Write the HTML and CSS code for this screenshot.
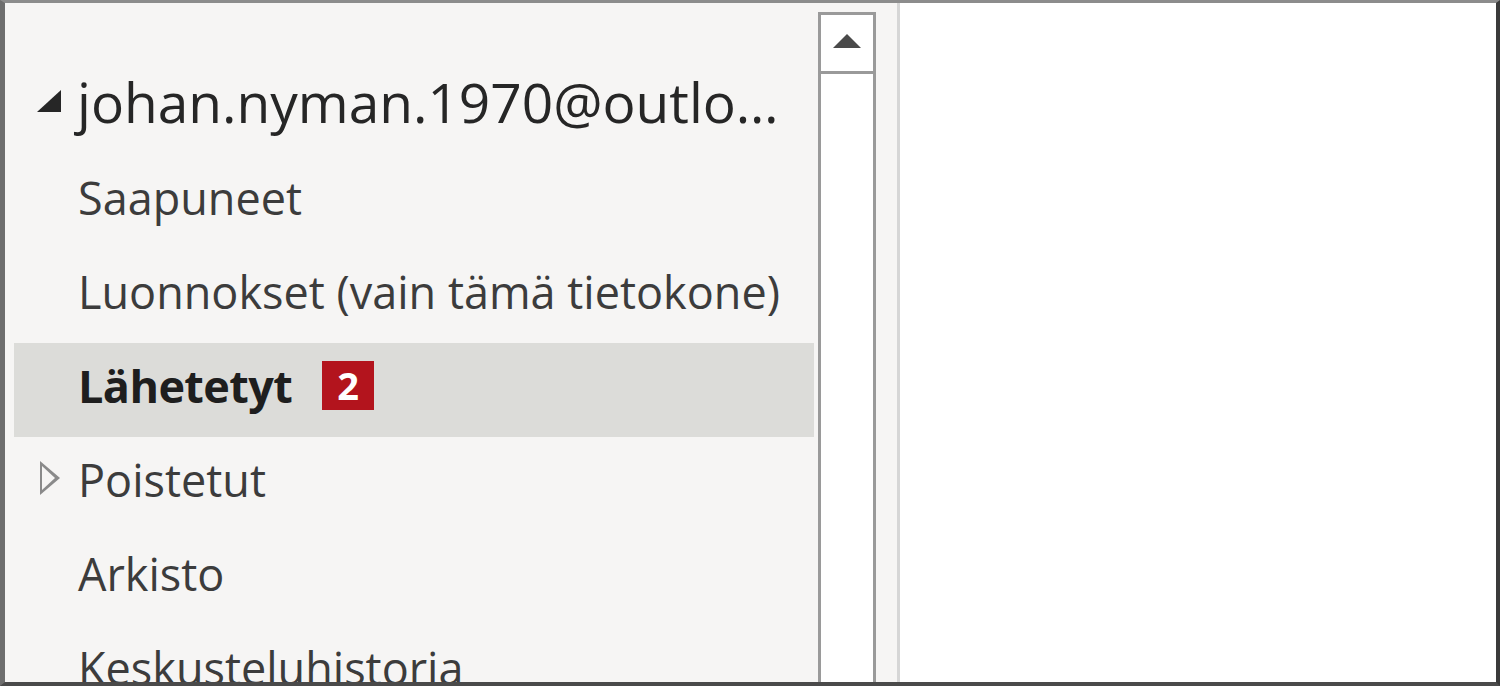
FILE: index.html
```html
<!DOCTYPE html>
<html lang="fi">
<head>
  <meta charset="UTF-8" />
  <meta name="viewport" content="width=device-width, initial-scale=1.0"/>
  <title>Kansiot</title>
  <link rel="stylesheet" href="styles.css">
</head>
<body>
  <div class="ikkuna">
    <div class="kansiot">
      <div class="tili">
        <span class="nuoli auki"></span>
        <span class="nimi">johan.nyman.1970@outlo…</span>
      </div>
      <div class="kansio">Saapuneet</div>
      <div class="kansio">Luonnokset (vain tämä tietokone)</div>
      <div class="kansio valittu">Lähetetyt <span class="maara">2</span></div>
      <div class="kansio">
        <span class="nuoli kiinni"></span>
        Poistetut
      </div>
      <div class="kansio">Arkisto</div>
      <div class="kansio">Keskusteluhistoria</div>
    </div>

    <div class="vieritys">
      <div class="ylos"><span class="kolmio"></span></div>
      <div class="ura"></div>
    </div>

    <div class="rako"></div>
    <div class="lukuruutu"></div>
  </div>
</body>
</html>
```

FILE: styles.css
```css
html, body {
  margin: 0;
  height: 100%;
  overflow: hidden;
}
body {
  font-family: "Open Sans", "Noto Sans", sans-serif;
  background: #ffffff;
}
.ikkuna {
  box-sizing: border-box;
  height: 686px;
  display: flex;
  border-top: 3px solid #8c8c8c;
  border-left: 5px solid #6e6e6e;
  border-right: 4px solid #3a3a3a;
  border-bottom: 4px solid #4a4a4a;
  background: #f6f5f4;
}
.kansiot {
  width: 813px;
  padding-top: 58px;
  background: #f6f5f4;
  overflow: hidden;
}
.tili {
  height: 94px;
  box-sizing: border-box;
  padding-bottom: 14px;
  display: flex;
  align-items: center;
  font-size: 55px;
  color: #262626;
  white-space: nowrap;
}
.kansio {
  position: relative;
  height: 94px;
  box-sizing: border-box;
  padding-bottom: 10px;
  display: flex;
  align-items: center;
  padding-left: 64px;
  margin-left: 9px;
  margin-right: 4px;
  font-size: 45px;
  color: #3c3c3c;
  white-space: nowrap;
}
.kansio.valittu {
  background: #dcdcd9;
  font-weight: bold;
  color: #1e1e1e;
  letter-spacing: -0.6px;
}
.maara {
  display: inline-block;
  width: 52px;
  height: 49px;
  line-height: 49px;
  margin-left: 30px;
  background: #b3141d;
  color: #ffffff;
  text-align: center;
  font-size: 38px;
  font-weight: bold;
  letter-spacing: 0;
}
.nuoli {
  display: inline-block;
}
.nuoli.auki {
  width: 0;
  height: 0;
  margin-left: 32px;
  margin-right: 16px;
  border-left: 24px solid transparent;
  border-bottom: 22px solid #262626;
}
.nuoli.kiinni {
  position: absolute;
  left: 26px;
  top: 24px;
  width: 20px;
  height: 34px;
}
.nuoli.kiinni::before,
.nuoli.kiinni::after {
  content: "";
  position: absolute;
  left: 0;
  top: 0;
  border-top: 17px solid transparent;
  border-bottom: 17px solid transparent;
  border-left: 20px solid #8a8a8a;
}
.nuoli.kiinni::after {
  top: 5px;
  border-top-width: 12px;
  border-bottom-width: 12px;
  border-left: 13px solid #f6f5f4;
  margin-left: 2px;
}
.vieritys {
  width: 58px;
  display: flex;
  flex-direction: column;
  padding-top: 9px;
}
.ylos {
  box-sizing: border-box;
  height: 62px;
  border: 3px solid #9a9a9a;
  background: #ffffff;
  display: flex;
  align-items: center;
  justify-content: center;
}
.kolmio {
  width: 0;
  height: 0;
  border-left: 14px solid transparent;
  border-right: 14px solid transparent;
  border-bottom: 14px solid #4a4a4a;
  margin-top: -4px;
}
.ura {
  flex: 1;
  border-left: 3px solid #9a9a9a;
  border-right: 3px solid #9a9a9a;
  background: #ffffff;
}
.rako {
  width: 21px;
  border-right: 3px solid #d6d6d6;
  background: #f6f5f4;
}
.lukuruutu {
  flex: 1;
  background: #ffffff;
}
```
